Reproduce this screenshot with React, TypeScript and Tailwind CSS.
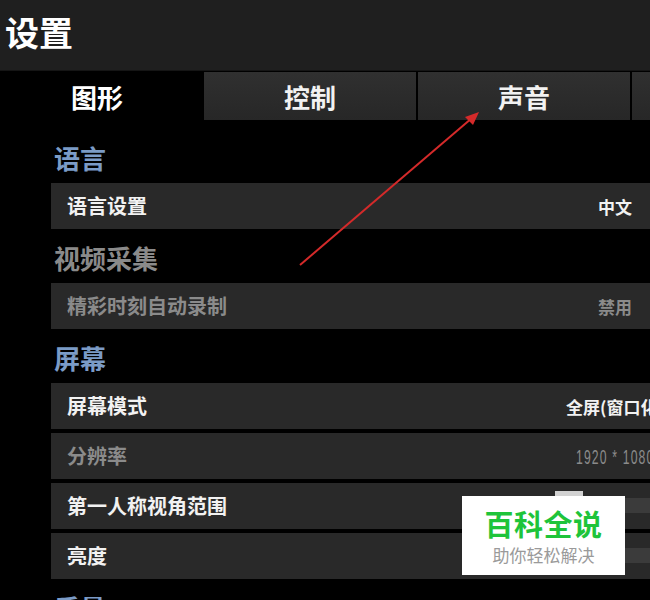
import React from 'react';

const cjk = "font-['Noto_Sans_CJK_SC','Noto_Sans',sans-serif]";

type Row = {
  label: string;
  value?: string;
  disabled?: boolean;
  numeric?: boolean;
  slider?: boolean;
};

type Section = {
  title: string;
  disabled?: boolean;
  rows: Row[];
};

const sections: Section[] = [
  { title: '语言', rows: [{ label: '语言设置', value: '中文' }] },
  { title: '视频采集', disabled: true, rows: [{ label: '精彩时刻自动录制', value: '禁用', disabled: true }] },
  {
    title: '屏幕',
    rows: [
      { label: '屏幕模式', value: '全屏(窗口化)' },
      { label: '分辨率', value: '1920 * 1080', disabled: true, numeric: true },
      { label: '第一人称视角范围', slider: true },
      { label: '亮度', slider: true },
    ],
  },
  { title: '质量', rows: [] },
];

const SettingRow: React.FC<{ row: Row; index: number }> = ({ row, index }) => (
  <div className="flex items-center h-[46px] w-[640px] bg-[#292929] pl-4">
    <span
      className={`flex-1 text-[20px] font-bold leading-none ${row.disabled ? 'text-[#8b8b8b]' : 'text-[#f2f2f2]'}`}
    >
      {row.label}
    </span>
    {row.slider ? (
      <div className="relative w-[136px] h-[46px] self-stretch">
        <div className="absolute left-0 right-0 top-[15px] h-[15px] bg-[#3b3b3b]" />
        {index === 2 && <div className="absolute left-0 top-[8px] w-[28px] h-[30px] bg-[#d2d2d2]" />}
      </div>
    ) : row.numeric ? (
      <div className="w-[136px] pl-[21px] whitespace-nowrap leading-none">
        <span className="inline-block origin-left scale-x-[0.58] font-['Liberation_Sans',sans-serif] text-[21px] tracking-[2px] text-[#8b8b8b]">
          {row.value}
        </span>
      </div>
    ) : (
      <span
        className={`w-[124px] mr-[14px] text-center whitespace-nowrap leading-none text-[17px] font-bold ${
          row.disabled ? 'text-[#8b8b8b]' : 'text-[#f2f2f2]'
        }`}
      >
        {row.value}
      </span>
    )}
  </div>
);

export default function App() {
  return (
    <div className={`relative w-[650px] h-[600px] overflow-hidden bg-black ${cjk}`}>
      {/* header */}
      <div className="h-[71px] bg-[#1f1f1f] flex items-center pl-[5px] border-b border-[#151515]">
        <h1 className="text-[34px] font-bold text-white leading-none -mt-[6px]">设置</h1>
      </div>

      {/* tabs */}
      <div className="flex gap-[2px] h-[48px] mt-[1px]">
        <div className="w-[202px] shrink-0 bg-black flex items-center justify-center pr-[8px] text-[26px] font-bold text-white">
          图形
        </div>
        <div className="w-[212px] shrink-0 bg-gradient-to-b from-[#303030] to-[#272727] flex items-center justify-center text-[26px] font-bold text-[#f2f2f2]">
          控制
        </div>
        <div className="w-[212px] shrink-0 bg-gradient-to-b from-[#303030] to-[#272727] flex items-center justify-center text-[26px] font-bold text-[#f2f2f2]">
          声音
        </div>
        <div className="w-[212px] shrink-0 bg-gradient-to-b from-[#303030] to-[#272727]" />
      </div>

      {/* sections */}
      <div className="pl-[51px] pt-[9px]">
        {sections.map((s) => (
          <div key={s.title}>
            <div className="h-[54px] flex items-center pl-[3px] pt-[4px]">
              <span
                className={`text-[26px] font-bold leading-none ${s.disabled ? 'text-[#8a8a8a]' : 'text-[#7b9bc6]'}`}
              >
                {s.title}
              </span>
            </div>
            <div className="flex flex-col gap-[4px]">
              {s.rows.map((r, i) => (
                <SettingRow key={r.label} row={r} index={i} />
              ))}
            </div>
          </div>
        ))}
      </div>

      {/* annotation arrow */}
      <svg className="absolute inset-0 pointer-events-none" width="650" height="600" viewBox="0 0 650 600">
        <line x1="300" y1="265" x2="472" y2="118" stroke="#d42a2a" strokeWidth="2" />
        <polygon points="479,112 465,117 473,125" fill="#d42a2a" />
      </svg>

      {/* watermark */}
      <div className="absolute left-[462px] top-[496px] w-[163px] h-[79px] bg-white flex flex-col items-center justify-center">
        <span className="text-[29px] font-bold text-[#1ec43a] leading-none tracking-[0.5px]">百科全说</span>
        <span className="text-[17px] text-[#9a9a9a] leading-none mt-[8px]">助你轻松解决</span>
      </div>
    </div>
  );
}
